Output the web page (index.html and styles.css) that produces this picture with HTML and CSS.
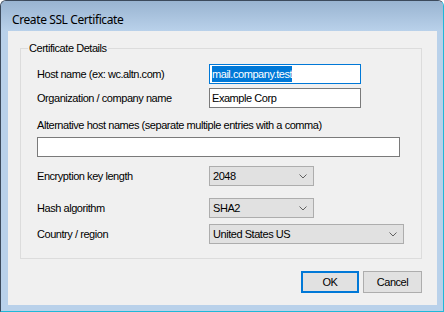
FILE: index.html
```html
<!DOCTYPE html>
<html lang="en">

<head>
  <meta charset="UTF-8">
  <title>Create SSL Certificate</title>
  <link rel="stylesheet" href="styles.css">
</head>

<body>

  <div class="window">
    <div class="titlebar">Create SSL Certificate</div>

    <div class="client">
      <fieldset class="group">
        <legend>Certificate Details</legend>

        <div class="row">
          <span class="label">Host name (ex: wc.altn.com)</span>
          <div class="textbox focused short"><span class="selected">mail.company.test</span></div>
        </div>

        <div class="row row-org">
          <span class="label">Organization / company name</span>
          <div class="textbox short">Example Corp</div>
        </div>

        <div class="label alt-label">Alternative host names (separate multiple entries with a comma)</div>
        <div class="textbox wide"></div>

        <div class="row row-enc">
          <span class="label">Encryption key length</span>
          <div class="combo small">2048
            <svg class="arrow" width="8" height="5" viewBox="0 0 8 5"><path d="M0.5 0.5 L4 4 L7.5 0.5" fill="none" stroke="#606060" stroke-width="1"/></svg>
          </div>
        </div>

        <div class="row row-hash">
          <span class="label">Hash algorithm</span>
          <div class="combo small">SHA2
            <svg class="arrow" width="8" height="5" viewBox="0 0 8 5"><path d="M0.5 0.5 L4 4 L7.5 0.5" fill="none" stroke="#606060" stroke-width="1"/></svg>
          </div>
        </div>

        <div class="row row-country">
          <span class="label">Country / region</span>
          <div class="combo large">United States US
            <svg class="arrow" width="8" height="5" viewBox="0 0 8 5"><path d="M0.5 0.5 L4 4 L7.5 0.5" fill="none" stroke="#606060" stroke-width="1"/></svg>
          </div>
        </div>
      </fieldset>

      <div class="buttons">
        <button class="btn default">OK</button>
        <button class="btn">Cancel</button>
      </div>
    </div>
  </div>

</body>

</html>
```

FILE: styles.css
```css
html {
  box-sizing: border-box;
}

*,
*:before,
*:after {
  box-sizing: inherit;
}

body {
  margin: 0;
  background: #ffffff;
  font-family: "Liberation Sans", Arial, sans-serif;
  font-size: 11px;
  letter-spacing: -0.45px;
  color: #000000;
}

.window {
  width: 444px;
  height: 312px;
  border: 1px solid #3c4a5c;
  border-right-color: #1fb8d8;
  border-bottom-color: #1fb8d8;
  border-radius: 6px 6px 0 0;
  background: #b9d1ea;
  padding: 0 6px 6px 7px;
  display: flex;
  flex-direction: column;
}

.titlebar {
  height: 30px;
  margin: 0 -6px 0 -7px;
  padding: 11px 0 0 11px;
  border-radius: 5px 5px 0 0;
  background: linear-gradient(#99b4d1, #b9d1ea);
  font-family: "Noto Sans", sans-serif;
  font-size: 12px;
  letter-spacing: -0.4px;
  line-height: 16px;
}

.client {
  flex: 1;
  background: #f0f0f0;
  padding: 11px 15px 0 12px;
  display: flex;
  flex-direction: column;
}

.group {
  margin: 0;
  height: 217px;
  border: 1px solid #dcdcdc;
  padding: 9px 0 0 16px;
}

.group legend {
  margin-left: -9px;
  padding: 0 1px;
  line-height: 13px;
}

.row {
  display: flex;
  align-items: center;
  height: 20px;
}

.label {
  width: 172px;
  flex: none;
}

.row-org {
  margin-top: 4px;
}

.alt-label {
  width: auto;
  margin-top: 9px;
  line-height: 16px;
}

.row-enc {
  margin-top: 9px;
}

.row-hash {
  margin-top: 12px;
}

.row-country {
  margin-top: 6px;
}

.textbox {
  height: 20px;
  background: #ffffff;
  border: 1px solid #7a7a7a;
  padding: 0 2px;
  line-height: 18px;
}

.textbox.focused {
  border-color: #0078d7;
}

.selected {
  background: #0078d7;
  color: #ffffff;
  padding: 2px 0;
}

.short {
  width: 152px;
}

.wide {
  width: 363px;
  margin-top: 4px;
}

.combo {
  height: 20px;
  background: #e1e1e1;
  border: 1px solid #adadad;
  padding: 0 3px;
  line-height: 18px;
  display: flex;
  align-items: center;
  justify-content: space-between;
}

.combo .arrow {
  margin-right: 3px;
}

.small {
  width: 105px;
}

.large {
  width: 195px;
}

.buttons {
  display: flex;
  justify-content: flex-end;
  gap: 4px;
  margin-top: 12px;
}

.btn {
  height: 22px;
  width: 59px;
  margin: 0;
  background: #e1e1e1;
  border: 1px solid #adadad;
  font-family: "Liberation Sans", Arial, sans-serif;
  font-size: 11px;
  letter-spacing: -0.45px;
  color: #000000;
  padding: 0;
}

.btn.default {
  width: 58px;
  border: 2px solid #0078d7;
}
```
